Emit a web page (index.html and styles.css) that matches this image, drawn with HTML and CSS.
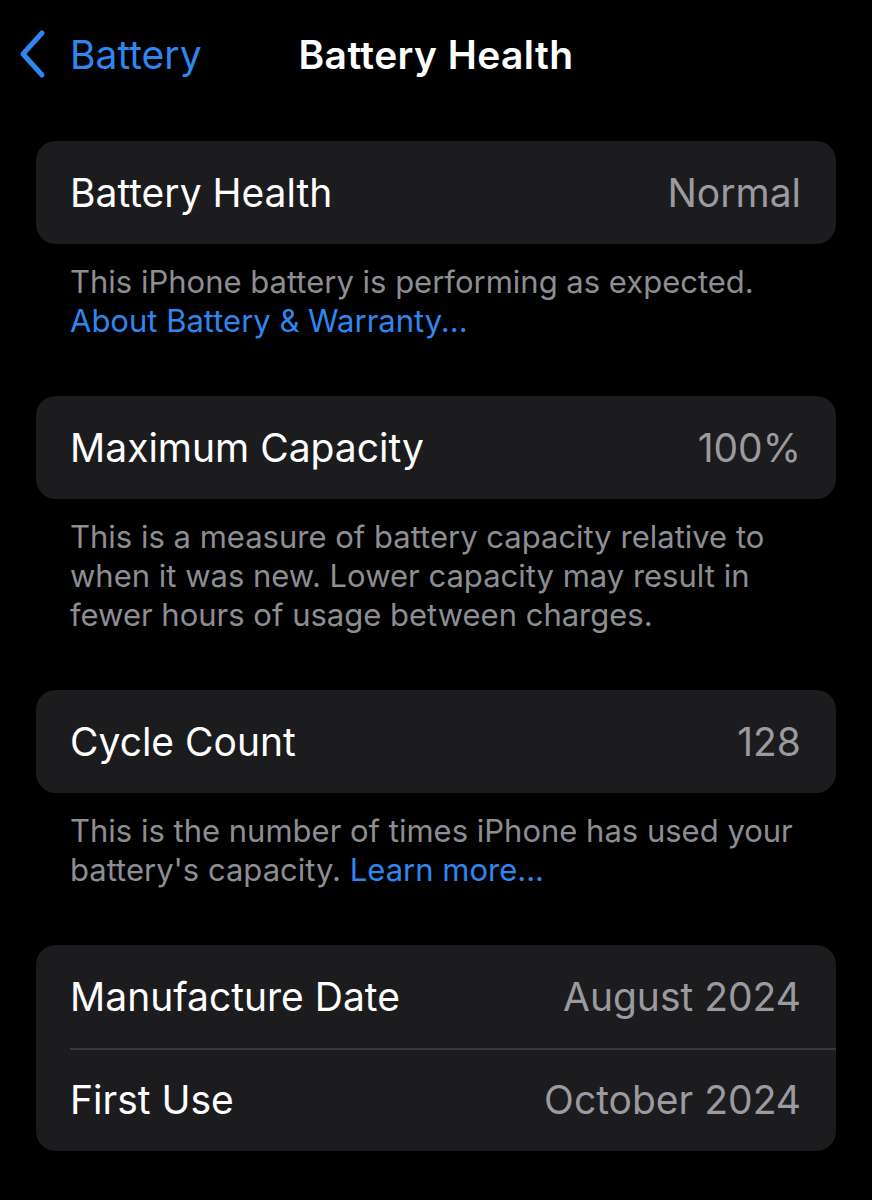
FILE: index.html
```html
<!DOCTYPE html>
<html>
<head>
<meta charset="utf-8">
<link rel="stylesheet" href="styles.css">
</head>
<body>
<div class="screen">
  <header class="nav">
    <a class="back">
      <svg class="chev" width="30" height="50" viewBox="0 0 30 50"><path d="M24 4 L5 25 L24 46" fill="none" stroke="#2f86ef" stroke-width="5" stroke-linecap="round" stroke-linejoin="round"/></svg>
      <span>Battery</span>
    </a>
    <h1 class="title">Battery Health</h1>
  </header>

  <section class="group">
    <div class="card">
      <div class="row"><span class="label">Battery Health</span><span class="value">Normal</span></div>
    </div>
    <p class="footer">This iPhone battery is performing as expected.<br><span class="link">About Battery &amp; Warranty...</span></p>
  </section>

  <section class="group">
    <div class="card">
      <div class="row"><span class="label">Maximum Capacity</span><span class="value">100%</span></div>
    </div>
    <p class="footer">This is a measure of battery capacity relative to<br>when it was new. Lower capacity may result in<br>fewer hours of usage between charges.</p>
  </section>

  <section class="group">
    <div class="card">
      <div class="row"><span class="label">Cycle Count</span><span class="value">128</span></div>
    </div>
    <p class="footer">This is the number of times iPhone has used your<br>battery's capacity. <span class="link">Learn more...</span></p>
  </section>

  <section class="group">
    <div class="card">
      <div class="row"><span class="label">Manufacture Date</span><span class="value">August 2024</span></div>
      <div class="row sep"><span class="label">First Use</span><span class="value">October 2024</span></div>
    </div>
  </section>
</div>
</body>
</html>
```

FILE: styles.css
```css
* { box-sizing: border-box; }
html, body { margin: 0; padding: 0; background: #000; }
body {
  font-family: Inter, "Noto Sans", "Liberation Sans", sans-serif;
  color: #fff;
  width: 872px;
  height: 1200px;
  overflow: hidden;
}
.screen { padding: 0 36px; }
.nav {
  position: relative;
  height: 110px;
  display: flex;
  align-items: center;
  justify-content: center;
  margin: 0 -36px;
}
.back {
  position: absolute;
  left: 18px;
  top: 29px;
  display: flex;
  align-items: center;
  gap: 22px;
  color: #2f86ef;
  font-size: 39px;
  letter-spacing: 0;
}
.chev { display: block; }
.title {
  margin: 0;
  font-size: 39px;
  font-weight: 600;
  letter-spacing: 0.4px;
  padding-bottom: 2px;
}
.group { margin-top: 31px; }
.group + .group { margin-top: 56px; }
.card {
  background: #1c1c1e;
  border-radius: 20px;
  overflow: hidden;
}
.row {
  height: 103px;
  display: flex;
  align-items: center;
  justify-content: space-between;
  padding: 0 35px 0 34px;
  font-size: 39px;
  letter-spacing: 0;
}
.row.sep { position: relative; }
.row.sep::before {
  content: "";
  position: absolute;
  left: 34px;
  right: 0;
  top: 0;
  height: 2px;
  background: #38383a;
}
.label { color: #fff; }
.value { color: #9a9aa0; }
.footer {
  margin: 0;
  padding: 18px 20px 0 34px;
  font-size: 31px;
  line-height: 39px;
  color: #8d8d93;
  letter-spacing: 0;
  white-space: nowrap;
}
.link { color: #2f86ef; }
```
